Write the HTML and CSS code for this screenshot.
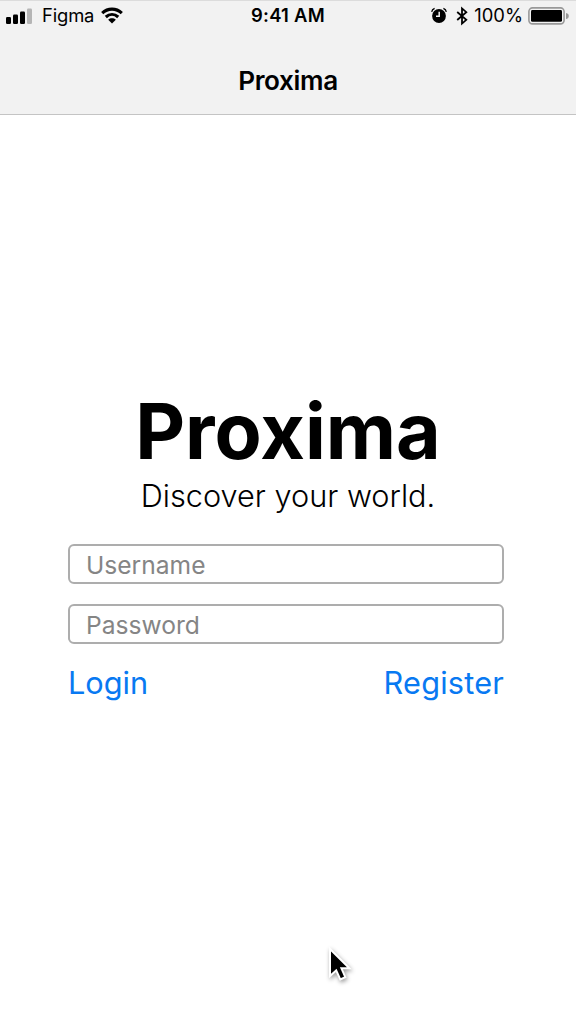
FILE: index.html
```
<!DOCTYPE html>
<html lang="en">
<head>
<meta charset="utf-8">
<title>Proxima</title>
<link rel="stylesheet" href="styles.css">
</head>
<body>
<header class="topbar">
  <div class="status">
    <div class="status-left">
      <svg class="signal" width="27" height="16" viewBox="0 0 27 16">
        <rect x="0" y="9" width="5" height="7" rx="1.2"/><rect x="7" y="6.5" width="5" height="9.5" rx="1.2"/><rect x="14" y="3.5" width="5" height="12.5" rx="1.2"/><rect class="dim" x="21" y=".5" width="5" height="15.5" rx="1.2"/>
      </svg>
      <span class="carrier">Figma</span>
      <svg class="wifi" width="22" height="16" viewBox="0 0 22 16">
        <path class="arc" d="M1.2 5.2C6.8-.2 15.2-.2 20.8 5.2M4.8 9C8.5 5.6 13.5 5.6 17.2 9"/><path d="M11 15.5 7.2 11.7C9.4 9.8 12.6 9.8 14.8 11.7Z"/>
      </svg>
    </div>
    <span class="clock">9:41 AM</span>
    <div class="status-right">
      <svg class="alarm" width="16" height="16" viewBox="0 0 16 16">
        <circle cx="8" cy="9" r="6.9"/><path class="bell" d="M.7 4.9Q1 2.4 3.6 1.4M15.3 4.9Q15 2.4 12.4 1.4"/><path class="hands" d="M8.2 4.8V9.2H5"/>
      </svg>
      <svg class="bluetooth" width="12" height="18" viewBox="0 0 12 18"><path d="M1.2 5 10.3 12.8 6 16.6V1.4L10.3 5.2 1.2 13"/></svg>
      <span class="percent">100%</span>
      <svg class="battery" width="42" height="18" viewBox="0 0 42 18">
        <rect class="shell" x=".9" y=".9" width="35.2" height="16" rx="3.6"/><rect x="3" y="3" width="31" height="11.8" rx="1.4"/><path class="tip" d="M38 6Q40.8 6.5 40.8 9T38 12Z"/>
      </svg>
    </div>
  </div>
  <div class="nav-title">Proxima</div>
</header>
<main class="login">
  <h1 class="brand">Proxima</h1>
  <p class="tagline">Discover your world.</p>
  <form class="form">
    <input class="field" type="text" placeholder="Username">
    <input class="field" type="password" placeholder="Password">
    <div class="actions"><a class="link link-login">Login</a><a class="link link-register">Register</a></div>
  </form>
</main>
<svg class="cursor" width="28" height="40" viewBox="0 0 28 40"><path d="M3 3V30L9.2 24.4 13.3 33.4 18.3 31.2 14.4 22.3H22.4Z"/></svg>
</body>
</html>
```
FILE: styles.css
```
* { box-sizing: border-box; }
body {
  margin: 0;
  width: 576px;
  height: 1030px;
  overflow: hidden;
  position: relative;
  background: #fff;
  color: #000;
  font-family: Inter, "Liberation Sans", sans-serif;
}
svg { display: block; flex: none; overflow: visible; }
.topbar {
  height: 115px;
  background: #f2f2f2;
  border-top: 1px solid #dcdcdc;
  border-bottom: 1px solid #c4c4c4;
}
.status {
  display: grid;
  grid-template-columns: 1fr auto 1fr;
  height: 28px;
  padding: 0 6px 0 6px;
  align-items: center;
  font-size: 18.4px;
  line-height: 28px;
  white-space: nowrap;
}
.status-left, .status-right { display: flex; align-items: center; }
.status-right { justify-content: flex-end; }
.carrier { margin-left: 9px; letter-spacing: -.15px; }
.wifi { margin-left: 7px; margin-top: 1px; }
.arc { fill: none; stroke: #000; stroke-width: 3.1; }
.dim { fill: #b5b5b5; }
.clock { font-weight: 600; letter-spacing: .3px; }
.bell { fill: none; stroke: #000; stroke-width: 1.3; }
.hands { fill: none; stroke: #f2f2f2; stroke-width: 1.5; }
.bluetooth { margin-left: 9px; margin-top: 1px; fill: none; stroke: #000; stroke-width: 1.8; }
.percent { margin-left: 6px; }
.battery { margin-left: 5px; margin-top: 1px; }
.signal { margin-top: 1px; }
.shell { fill: none; stroke: #999; stroke-width: 1.6; }
.tip { fill: #999; }
.nav-title {
  margin-top: 32px;
  text-align: center;
  font-size: 26.1px;
  font-weight: 600;
  letter-spacing: -.35px;
  line-height: 40px;
}
.login { display: flex; flex-direction: column; align-items: center; padding-top: 271px; }
.brand { margin: 0; font-size: 77px; font-weight: 700; line-height: 90px; }
.tagline { margin: 0; font-size: 30.7px; font-weight: 300; line-height: 40px; }
.form { display: flex; flex-direction: column; width: 436px; margin: 28px 0 0 -4px; gap: 20px; }
.field {
  width: 100%;
  height: 40px;
  padding: 1px 16px 0;
  border: 2px solid #adadad;
  border-radius: 6px;
  background: #fff;
  font: 24.6px Inter, "Liberation Sans", sans-serif;
}
.field::placeholder { color: #858585; opacity: 1; }
.actions { display: flex; justify-content: space-between; margin-top: -1px; }
.link { color: #0879f2; font-size: 30.7px; line-height: 40px; }
.link-register { letter-spacing: .2px; }
.cursor {
  position: absolute;
  left: 327px;
  top: 946px;
  fill: #000;
  stroke: #fff;
  stroke-width: 2;
  filter: drop-shadow(1px 2px 2px rgba(0, 0, 0, .4));
}
```
